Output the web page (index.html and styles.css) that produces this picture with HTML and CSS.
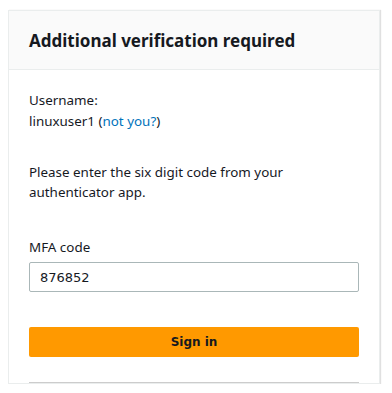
FILE: index.html
```html
<!DOCTYPE html>
<html>
<head>
<meta charset="utf-8">
<link rel="stylesheet" href="styles.css">
</head>
<body>
<div class="card">
  <div class="card-header">
    <h1 class="title">Additional verification required</h1>
  </div>
  <div class="card-body">
    <div class="user">
      <div>Username:</div>
      <div>linuxuser1 (<a class="link" href="#">not you?</a>)</div>
    </div>
    <p class="intro">Please enter the six digit code from your authenticator app.</p>
    <label class="label" for="mfa">MFA code</label>
    <input id="mfa" class="input" type="text" value="876852">
    <button class="btn">Sign in</button>
    <hr class="divider">
  </div>
</div>
</body>
</html>
```

FILE: styles.css
```css
html, body {
  margin: 0;
  padding: 0;
  background: #ffffff;
  overflow: hidden;
}
body {
  padding: 10px 0 0 8px;
  font-family: "Noto Sans", sans-serif;
  color: #16191f;
  font-size: 13.4px;
}
.card {
  width: 370px;
  border: 1px solid #eaeded;
  box-shadow: 1px 0 1px rgba(0,0,0,0.12);
  background: #ffffff;
}
.card-header {
  background: #fafafa;
  border-bottom: 1px solid #eaeded;
  height: 58px;
  display: flex;
  align-items: center;
  padding: 0 20px;
}
.title {
  margin: 0;
  font-size: 17px;
  font-weight: 700;
  color: #16191f;
}
.card-body {
  padding: 20px 20px 0 20px;
  display: flex;
  flex-direction: column;
}
.user {
  line-height: 21px;
}
.link {
  color: #0073bb;
  text-decoration: none;
}
.intro {
  margin: 30px 0 0 0;
  line-height: 20px;
}
.label {
  margin-top: 35px;
  line-height: 20px;
}
.input {
  margin-top: 5px;
  height: 30px;
  box-sizing: border-box;
  width: 330px;
  border: 1px solid #aab7b8;
  border-radius: 2px;
  padding: 0 10px;
  font-family: "DejaVu Sans", sans-serif;
  font-size: 13px;
  color: #16191f;
}
.btn {
  margin-top: 35px;
  width: 330px;
  height: 30px;
  background: #ff9900;
  border: none;
  border-radius: 2px;
  font-family: "DejaVu Sans", sans-serif;
  font-weight: 700;
  font-size: 12px;
  color: #16191f;
}
.divider {
  margin: 25px 0 0 0;
  width: 330px;
  border: none;
  border-top: 1px solid #cccccc;
}
```
